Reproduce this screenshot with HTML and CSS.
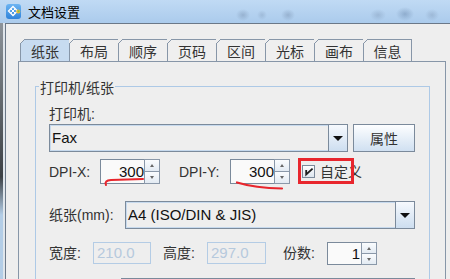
FILE: index.html
```html
<!DOCTYPE html>
<html lang="zh">
<head>
    <meta charset="UTF-8">
    <meta name="viewport" content="width=device-width, initial-scale=1.0">
    <title>文档设置</title>
    <link rel="stylesheet" href="styles.css">
</head>
<body>
    <div class="titlebar">
        <svg class="app-icon" width="15" height="15" viewBox="0 0 15 15">
            <defs>
                <linearGradient id="ig" x1="0" y1="0" x2="0" y2="1">
                    <stop offset="0" stop-color="#6cb4f2"/>
                    <stop offset="1" stop-color="#2f83da"/>
                </linearGradient>
            </defs>
            <rect x="0" y="0" width="15" height="15" rx="3" fill="url(#ig)"/>
            <path d="M7 2.5 L11.5 7 L7 11.5 L2.5 7 Z" fill="none" stroke="#fff" stroke-width="1.3"/>
            <path d="M4.8 4.8 L9.2 9.2 M9.2 4.8 L4.8 9.2" stroke="#fff" stroke-width="1"/>
            <circle cx="12.2" cy="7.5" r="2" fill="#e9b53a"/>
            <circle cx="12.6" cy="7.2" r="1" fill="#7cc44e"/>
        </svg>
        <span class="title">文档设置</span>
    </div>

    <div class="frame">
        <div class="frame-edge"></div>
        <div class="window">
            <div class="tabs">
                <div class="tab active">纸张</div>
                <div class="tab">布局</div>
                <div class="tab">顺序</div>
                <div class="tab">页码</div>
                <div class="tab">区间</div>
                <div class="tab">光标</div>
                <div class="tab">画布</div>
                <div class="tab">信息</div>
            </div>

            <div class="panel">
                <fieldset class="group">
                    <legend>打印机/纸张</legend>
                    <div class="group-body">
                        <div class="label">打印机:</div>
                        <div class="row">
                            <div class="combo printer">
                                <span class="combo-text">Fax</span>
                                <span class="combo-btn"></span>
                            </div>
                            <button class="btn">属性</button>
                        </div>

                        <div class="row dpi">
                            <span class="field-label w51">DPI-X:</span>
                            <div class="spinner">
                                <span class="spin-input">300</span>
                                <span class="spin-btns"><i class="up"></i><i class="down"></i></span>
                            </div>
                            <span class="field-label w51 gap19">DPI-Y:</span>
                            <div class="spinner">
                                <span class="spin-input">300</span>
                                <span class="spin-btns"><i class="up"></i><i class="down"></i></span>
                            </div>
                            <span class="checkbox">
                                <svg width="11" height="11" viewBox="0 0 11 11">
                                    <path d="M3.2 4 L3.2 8.4 L9.6 2.6" fill="none" stroke="#1e1e1e" stroke-width="1.8"/>
                                </svg>
                            </span>
                            <span class="check-text">自定义</span>

                            <svg class="marks" width="300" height="40" viewBox="0 0 300 40">
                                <path d="M57 26 Q55 21.5 62 21 L94 20" fill="none" stroke="#e8262d" stroke-width="2" stroke-linecap="round"/>
                                <path d="M188 23.5 Q206 29 233 29.5" fill="none" stroke="#e8262d" stroke-width="2.2" stroke-linecap="round"/>
                            </svg>
                            <span class="mark-box"></span>
                        </div>

                        <div class="row paper">
                            <span class="field-label w76">纸张(mm):</span>
                            <div class="combo a4">
                                <span class="combo-text">A4 (ISO/DIN &amp; JIS)</span>
                                <span class="combo-btn"></span>
                            </div>
                        </div>

                        <div class="row size">
                            <span class="field-label w44">宽度:</span>
                            <span class="text-field off w58">210.0</span>
                            <span class="field-label w44 gap12">高度:</span>
                            <span class="text-field off w59">297.0</span>
                            <span class="field-label w44 gap17">份数:</span>
                            <div class="spinner small">
                                <span class="spin-input">1</span>
                                <span class="spin-btns"><i class="up"></i><i class="down"></i></span>
                            </div>
                        </div>

                        <div class="row more">
                            <div class="combo extra">
                                <span class="combo-text"></span>
                                <span class="combo-btn"></span>
                            </div>
                        </div>
                    </div>
                </fieldset>
            </div>
        </div>
    </div>
</body>
</html>
```

FILE: styles.css
```css
/* document settings dialog */
* {
    box-sizing: border-box;
}

body {
    margin: 0;
    width: 450px;
    height: 279px;
    overflow: hidden;
    background: #eeeeee;
    font-family: "Liberation Sans", "Noto Sans CJK SC", sans-serif;
    font-size: 14px;
    color: #2a2a2a;
}

/* title bar */
.titlebar {
    height: 23px;
    display: flex;
    align-items: center;
    padding-left: 6px;
    background:
        radial-gradient(ellipse 7px 6px at 243px 15px, rgba(80, 100, 130, 0.28), transparent),
        radial-gradient(ellipse 5px 5px at 262px 15px, rgba(80, 100, 130, 0.2), transparent),
        radial-gradient(ellipse 7px 6px at 288px 15px, rgba(80, 100, 130, 0.28), transparent),
        radial-gradient(ellipse 8px 6px at 378px 15px, rgba(80, 100, 130, 0.22), transparent),
        radial-gradient(ellipse 9px 7px at 405px 14px, rgba(60, 90, 130, 0.3), transparent),
        radial-gradient(ellipse 7px 6px at 432px 15px, rgba(80, 100, 130, 0.22), transparent),
        linear-gradient(#c0daf4, #abcbec);
}

.app-icon {
    display: block;
}

.title {
    margin-left: 7px;
    font-family: "Noto Sans CJK SC", sans-serif;
    font-size: 13px;
    color: #000;
}

/* window body */
.frame {
    display: flex;
    height: 256px;
    overflow: hidden;
}

.frame-edge {
    width: 5px;
    background:
        linear-gradient(to right, transparent 3px, #dfe5eb 3px),
        linear-gradient(#8c939a, #3d4145 60%, #b3cde6 75%);
}

.window {
    flex: 1;
    border-top: 1px solid #6b7888;
    border-left: 1px solid #6b7888;
    padding: 15px 0 0 12px;
}

/* tabs */
.tabs {
    display: flex;
    margin-left: 2px;
    height: 22px;
}

.tab {
    position: relative;
    width: 49px;
    border-top: 1px solid #8796a8;
    border-left: 1px solid #8796a8;
    padding-top: 3px;
    line-height: 18px;
    text-align: center;
    color: #333;
    background: #efefef;
}

.tab:last-child {
    width: 49px;
    border-right: 1px solid #8796a8;
}

.tab::before {
    content: "";
    position: absolute;
    left: -1px;
    top: -1px;
    width: 6px;
    height: 6px;
    background: linear-gradient(135deg, #eeeeee 0 3.1px, #8796a8 3.1px 4px, transparent 4px);
}

.tab.active {
    background: #c7dbf0;
}

.panel {
    width: 428px;
    height: 218px;
    overflow: hidden;
    border: 1px solid #8796a8;
    border-bottom: none;
    background: #eeeeee;
}

/* group box */
.group {
    margin: 14px 15px 0 16px;
    padding: 0;
    min-width: 0;
    border: 1px solid #adc9e6;
}

.group legend {
    margin-left: 3px;
    padding: 4px 1px 0;
    line-height: 16px;
    color: #333;
}

.group-body {
    padding: 10px 0 0 13px;
}

.label {
    line-height: 16px;
    color: #333;
}

.row {
    position: relative;
    display: flex;
    align-items: center;
    margin-top: 2px;
}

.row.dpi {
    margin-top: 7px;
    height: 25px;
}

.row.paper {
    margin-top: 17px;
}

.row.size {
    margin-top: 13px;
    align-items: flex-start;
}

.row.more {
    margin-top: 13px;
    padding-left: 72px;
}

.field-label {
    line-height: 16px;
    color: #333;
    font-size: 14px;
}

.row.size .field-label {
    margin-top: 3px;
}

.w44 { width: 44px; }
.w51 { width: 51px; }
.w76 { width: 76px; }
.gap12 { margin-left: 12px; }
.gap17 { margin-left: 17px; }
.gap19 { margin-left: 19px; }

/* combo boxes */
.combo {
    display: flex;
    height: 28px;
    border: 1px solid #7b8a9b;
    background: #eeeeee;
    box-shadow: inset 0 0 0 1px #c6d9ed;
}

.combo-text {
    flex: 1;
    padding-left: 2px;
    font-size: 15px;
    line-height: 26px;
    color: #111;
}

.combo-btn {
    width: 19px;
    display: flex;
    align-items: center;
    justify-content: center;
    border-left: 1px solid #7b8a9b;
    background: linear-gradient(#f6f9fd, #cddef0);
}

.combo-btn::after {
    content: "";
    width: 0;
    height: 0;
    border-left: 5px solid transparent;
    border-right: 5px solid transparent;
    border-top: 5px solid #111;
}

.printer { width: 299px; }
.a4 { width: 290px; }
.extra { width: 294px; }

.btn {
    width: 62px;
    height: 28px;
    margin-left: 5px;
    padding: 0;
    border: 1px solid #7b8a9b;
    background: linear-gradient(#fdfeff, #d0e0f1);
    font-family: "Noto Sans CJK SC", sans-serif;
    font-size: 14px;
    color: #333;
}

/* spinners */
.spinner {
    display: flex;
    height: 25px;
}

.spinner.small {
    height: 23px;
}

.spin-input {
    width: 44px;
    border: 1px solid #7b8a9b;
    border-right: none;
    background: #fafafa;
    text-align: right;
    padding-right: 0;
    font-size: 15px;
    line-height: 23px;
    color: #111;
}

.spinner.small .spin-input {
    width: 34px;
    line-height: 21px;
    padding-right: 1px;
}

.spin-btns {
    width: 16px;
    display: flex;
    flex-direction: column;
    border: 1px solid #8a98a9;
}

.spin-btns i {
    flex: 1;
    display: flex;
    align-items: center;
    justify-content: center;
    background: linear-gradient(#fafcfe, #e3ebf3);
}

.spin-btns i.up {
    border-bottom: 1px solid #8a98a9;
}

.spin-btns i::after {
    content: "";
    width: 0;
    height: 0;
    border-left: 2.5px solid transparent;
    border-right: 2.5px solid transparent;
}

.spin-btns i.up::after {
    border-bottom: 3px solid #666;
}

.spin-btns i.down::after {
    border-top: 3px solid #666;
}

/* checkbox */
.checkbox {
    width: 13px;
    height: 13px;
    margin-left: 12px;
    display: flex;
    align-items: center;
    justify-content: center;
    border: 1px solid #7b8a9b;
    background: linear-gradient(#fdfdfe, #dde6ef);
}

.checkbox svg {
    display: block;
}

.check-text {
    margin-left: 5px;
    line-height: 16px;
    color: #333;
}

/* disabled text fields */
.text-field {
    height: 22px;
    padding-left: 3px;
    border: 1px solid #b4cce5;
    background: #eeeeee;
    font-size: 15px;
    line-height: 20px;
}

.text-field.off {
    color: #b6c9dd;
}

.w58 { width: 58px; }
.w59 { width: 59px; }

/* red hand-drawn annotations */
.marks {
    position: absolute;
    left: 0;
    top: 0;
    overflow: visible;
    pointer-events: none;
}

.mark-box {
    position: absolute;
    left: 249px;
    top: -1px;
    width: 56px;
    height: 26px;
    border: 3px solid #e8262d;
}
```
